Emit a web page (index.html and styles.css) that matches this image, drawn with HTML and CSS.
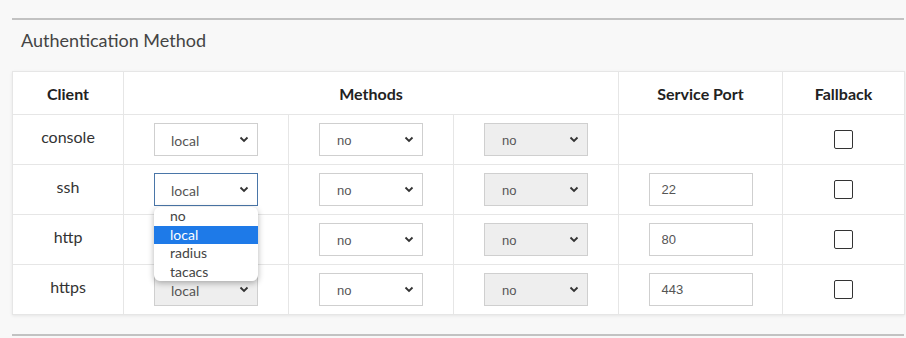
FILE: index.html
```html
<!DOCTYPE html>
<html>
<head>
<meta charset="utf-8">
<link rel="stylesheet" href="styles.css">
</head>
<body>
<div class="panel">
  <div class="panel-title">Authentication Method</div>
  <table class="auth">
    <colgroup>
      <col class="c-client"><col class="c-m"><col class="c-m"><col class="c-m"><col class="c-port"><col class="c-fb">
    </colgroup>
    <thead>
      <tr><th>Client</th><th colspan="3">Methods</th><th>Service Port</th><th>Fallback</th></tr>
    </thead>
    <tbody>
      <tr>
        <td class="client">console</td>
        <td><div class="select src"><span>local</span><svg width="10" height="7" viewBox="0 0 10 7"><path d="M1.5 1.5l3.5 3.5 3.5-3.5" fill="none" stroke="#333" stroke-width="1.8"/></svg></div></td>
        <td><div class="select"><span>no</span><svg width="10" height="7" viewBox="0 0 10 7"><path d="M1.5 1.5l3.5 3.5 3.5-3.5" fill="none" stroke="#333" stroke-width="1.8"/></svg></div></td>
        <td><div class="select disabled"><span>no</span><svg width="10" height="7" viewBox="0 0 10 7"><path d="M1.5 1.5l3.5 3.5 3.5-3.5" fill="none" stroke="#333" stroke-width="1.8"/></svg></div></td>
        <td></td>
        <td><div class="check"></div></td>
      </tr>
      <tr>
        <td class="client">ssh</td>
        <td>
          <div class="select-wrap">
            <div class="select src focus"><span>local</span><svg width="10" height="7" viewBox="0 0 10 7"><path d="M1.5 1.5l3.5 3.5 3.5-3.5" fill="none" stroke="#333" stroke-width="1.8"/></svg></div>
            <ul class="dropdown">
              <li>no</li>
              <li class="active">local</li>
              <li>radius</li>
              <li>tacacs</li>
            </ul>
          </div>
        </td>
        <td><div class="select"><span>no</span><svg width="10" height="7" viewBox="0 0 10 7"><path d="M1.5 1.5l3.5 3.5 3.5-3.5" fill="none" stroke="#333" stroke-width="1.8"/></svg></div></td>
        <td><div class="select disabled"><span>no</span><svg width="10" height="7" viewBox="0 0 10 7"><path d="M1.5 1.5l3.5 3.5 3.5-3.5" fill="none" stroke="#333" stroke-width="1.8"/></svg></div></td>
        <td><div class="input">22</div></td>
        <td><div class="check"></div></td>
      </tr>
      <tr>
        <td class="client">http</td>
        <td><div class="select src"><span>local</span><svg width="10" height="7" viewBox="0 0 10 7"><path d="M1.5 1.5l3.5 3.5 3.5-3.5" fill="none" stroke="#333" stroke-width="1.8"/></svg></div></td>
        <td><div class="select"><span>no</span><svg width="10" height="7" viewBox="0 0 10 7"><path d="M1.5 1.5l3.5 3.5 3.5-3.5" fill="none" stroke="#333" stroke-width="1.8"/></svg></div></td>
        <td><div class="select disabled"><span>no</span><svg width="10" height="7" viewBox="0 0 10 7"><path d="M1.5 1.5l3.5 3.5 3.5-3.5" fill="none" stroke="#333" stroke-width="1.8"/></svg></div></td>
        <td><div class="input">80</div></td>
        <td><div class="check"></div></td>
      </tr>
      <tr>
        <td class="client">https</td>
        <td><div class="select src disabled"><span>local</span><svg width="10" height="7" viewBox="0 0 10 7"><path d="M1.5 1.5l3.5 3.5 3.5-3.5" fill="none" stroke="#333" stroke-width="1.8"/></svg></div></td>
        <td><div class="select"><span>no</span><svg width="10" height="7" viewBox="0 0 10 7"><path d="M1.5 1.5l3.5 3.5 3.5-3.5" fill="none" stroke="#333" stroke-width="1.8"/></svg></div></td>
        <td><div class="select disabled"><span>no</span><svg width="10" height="7" viewBox="0 0 10 7"><path d="M1.5 1.5l3.5 3.5 3.5-3.5" fill="none" stroke="#333" stroke-width="1.8"/></svg></div></td>
        <td><div class="input">443</div></td>
        <td><div class="check"></div></td>
      </tr>
    </tbody>
  </table>
  <div class="panel-foot"></div>
</div>
</body>
</html>
```
FILE: styles.css
```css
html, body {
  margin: 0;
  padding: 0;
  background: #f8f8f8;
}
body {
  font-family: Lato, "Noto Sans", sans-serif;
  color: #333;
  width: 906px;
  height: 338px;
  overflow: hidden;
}
.panel {
  margin: 18px 2px 0 12px;
  border-top: 2px solid #c2c2c2;
}
.panel-title {
  box-sizing: border-box;
  height: 51px;
  padding: 9px 0 0 9px;
  font-size: 18px;
  line-height: 22px;
  color: #444;
}
.auth {
  width: 892px;
  table-layout: fixed;
  border-collapse: collapse;
  background: #fff;
  box-shadow: 0 1px 3px rgba(0,0,0,0.08);
}
.c-client { width: 111px; }
.c-m { width: 165px; }
.c-port { width: 164px; }
.c-fb { width: 122px; }
.auth th, .auth td {
  border: 1px solid #e6e6e6;
  padding: 0;
  text-align: center;
  vertical-align: middle;
}
.auth th {
  height: 42px;
  font-size: 16px;
  font-weight: 700;
  color: #222;
}
.auth td {
  height: 49px;
}
.auth td.client {
  height: 43px;
  font-size: 16px;
  color: #333;
  padding-bottom: 6px;
}
.select {
  box-sizing: border-box;
  width: 104px;
  height: 33px;
  margin: 0 auto;
  border: 1px solid #cfcfcf;
  background: #fff;
  display: flex;
  align-items: center;
  justify-content: space-between;
  padding: 0 8px 0 17px;
  font-family: "Liberation Sans", Arial, sans-serif;
  font-size: 13px;
  color: #555;
}
.select.src {
  font-family: Lato, "Noto Sans", sans-serif;
  font-size: 14px;
  padding-left: 16px;
}
.select.disabled {
  background: #eeeeee;
}
.select.focus {
  border-color: #4a76a8;
}
.select span {
  margin-top: 2px;
}
.select-wrap {
  position: relative;
  width: 104px;
  margin: 0 auto;
}
.dropdown {
  position: absolute;
  top: 34px;
  left: 0;
  width: 104px;
  box-sizing: border-box;
  margin: 0;
  padding: 0;
  list-style: none;
  background: #fff;
  border-radius: 6px;
  box-shadow: 0 2px 6px rgba(0,0,0,0.3);
  overflow: hidden;
  z-index: 5;
  text-align: left;
  font-size: 14px;
  color: #444;
}
.dropdown li {
  height: 18.5px;
  line-height: 18.5px;
  padding-left: 16px;
}
.dropdown li.active {
  background: #1e7ae8;
  color: #fff;
}
.input {
  box-sizing: border-box;
  width: 104px;
  height: 33px;
  margin: 0 auto;
  border: 1px solid #cfcfcf;
  background: #fff;
  display: flex;
  align-items: center;
  padding-left: 12px;
  font-family: "Liberation Sans", Arial, sans-serif;
  font-size: 13px;
  color: #555;
  text-align: left;
}
.check {
  box-sizing: border-box;
  width: 19px;
  height: 19px;
  margin: 0 auto;
  border: 1.5px solid #333;
  border-radius: 2px;
  background: #fff;
}
.panel-foot {
  margin-top: 19px;
  border-top: 2px solid #c2c2c2;
}
```
